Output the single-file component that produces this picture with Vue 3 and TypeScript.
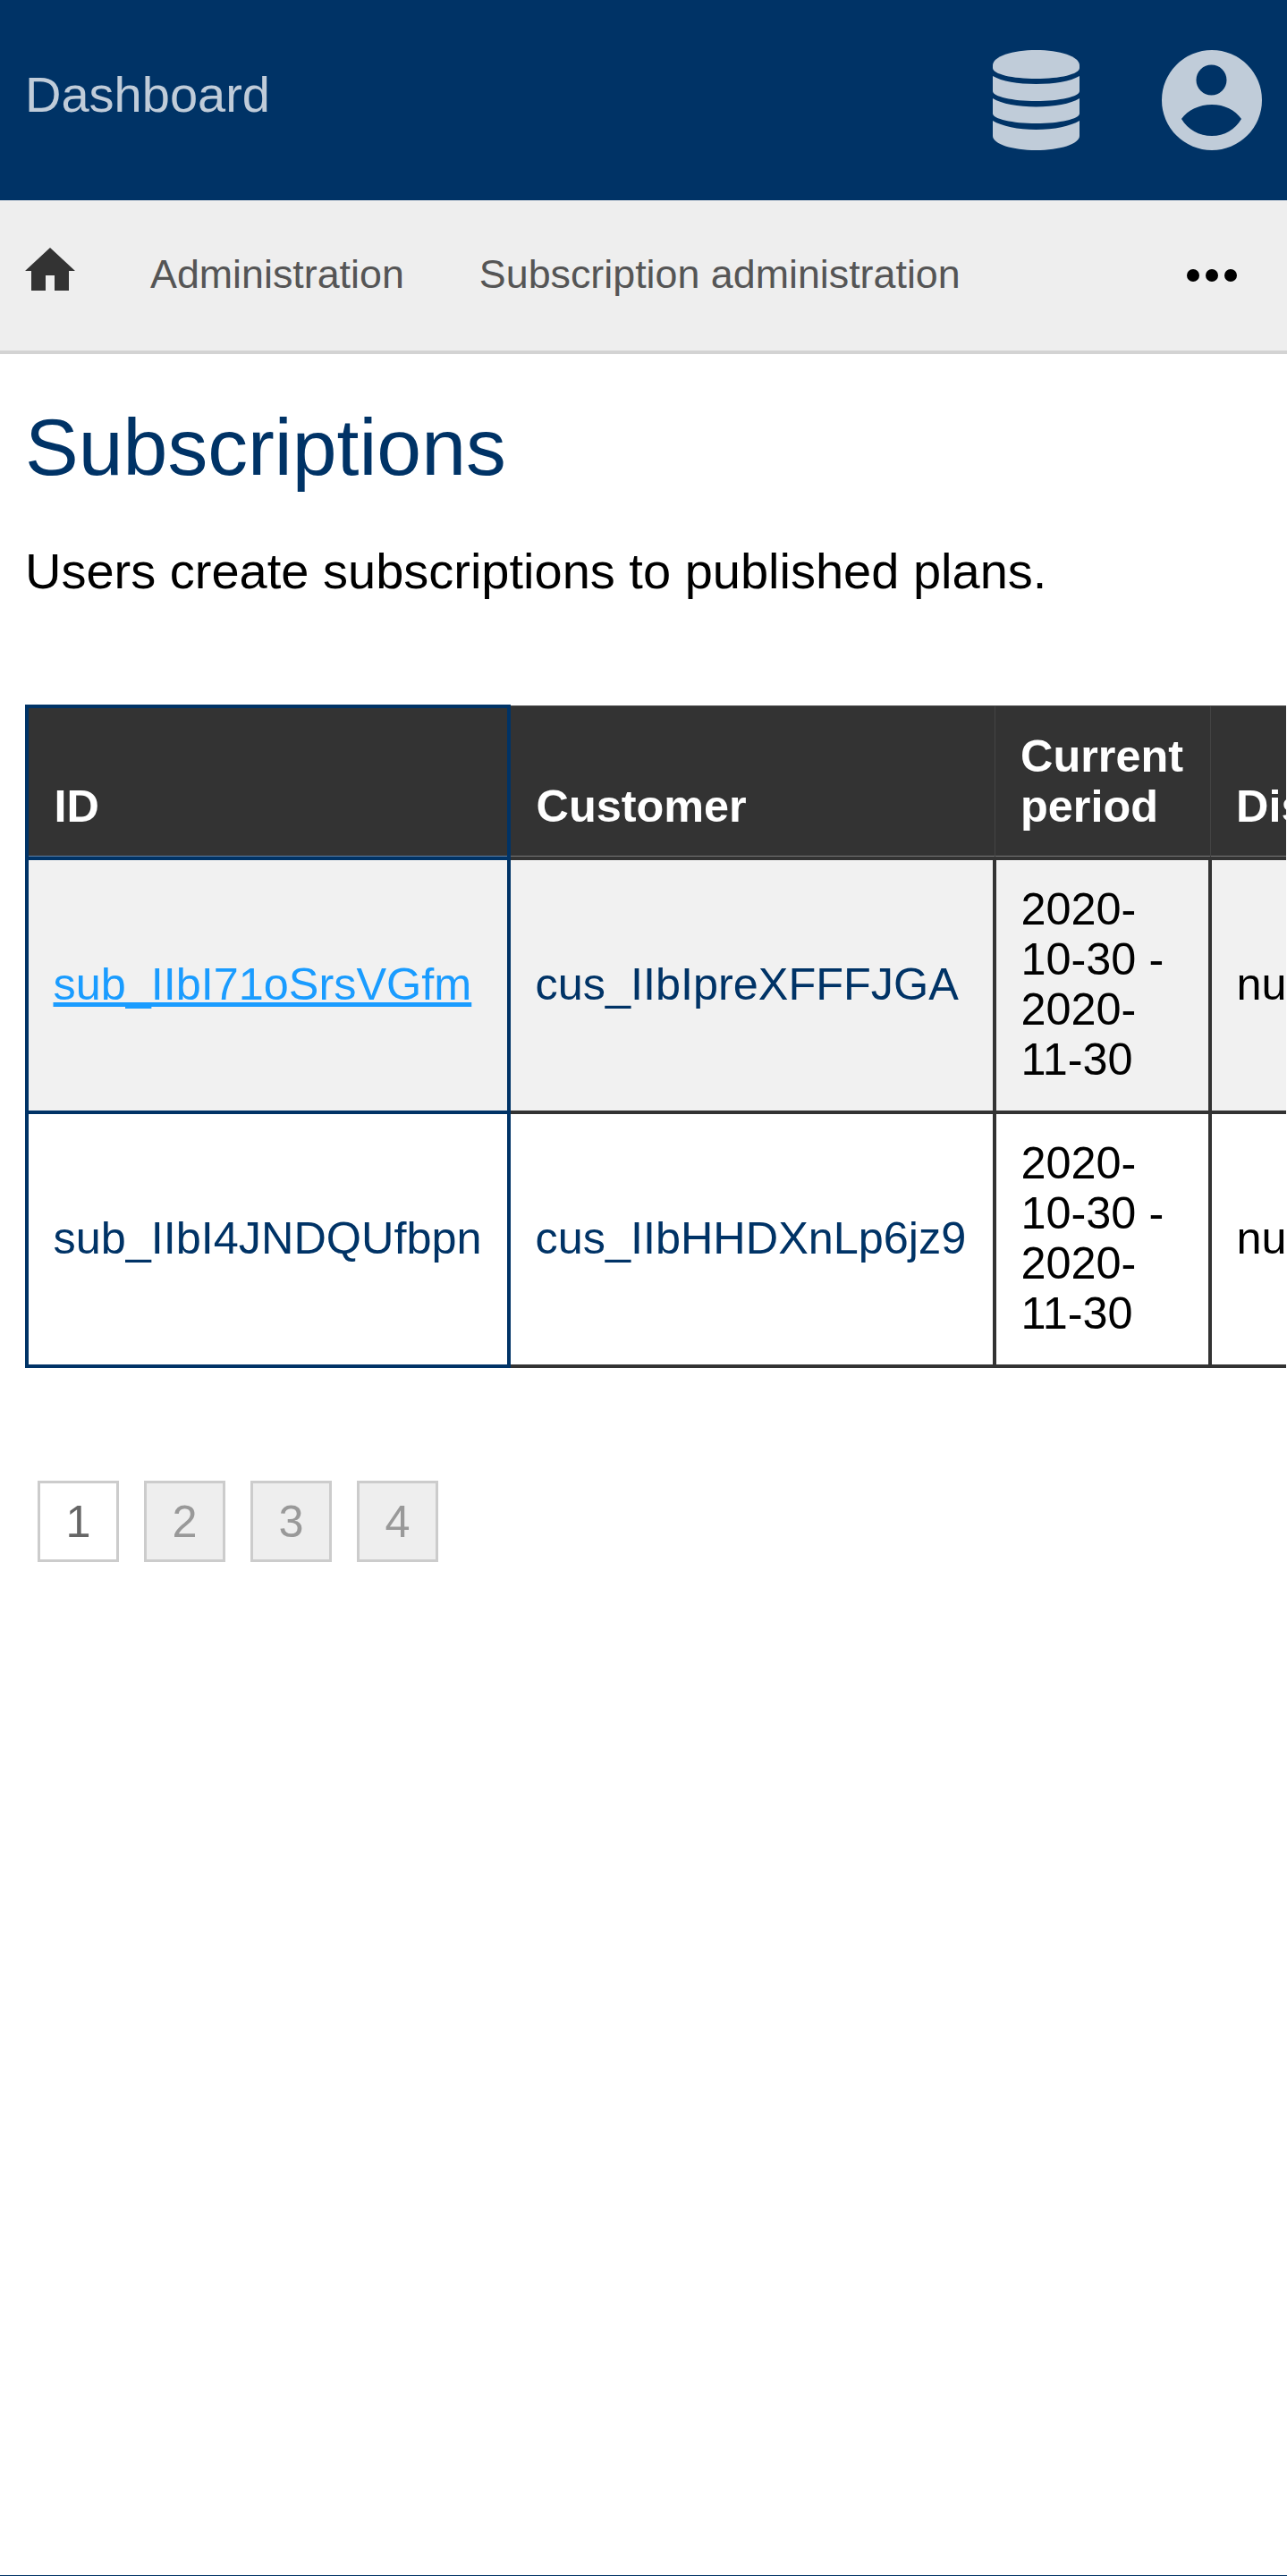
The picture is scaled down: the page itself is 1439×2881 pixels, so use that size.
<script setup lang="ts">
const rows = [
  { id: 'sub_IIbI71oSrsVGfm', customer: 'cus_IIbIpreXFFFJGA', linked: true },
  { id: 'sub_IIbI4JNDQUfbpn', customer: 'cus_IIbHHDXnLp6jz9', linked: false },
]
const pages = [1, 2, 3, 4]
</script>

<template>
  <div class="page">
    <header class="topbar">
      <a class="brand">Dashboard</a>
      <div class="topbar-icons">
        <svg class="icon-db" viewBox="0 0 97 112" fill="currentColor">
          <path d="M48.5 0C75 0 97 7 97 17V20C97 27 75 32 48.5 32S0 27 0 20V17C0 7 22 0 48.5 0z" />
          <path d="M0 29C10 35 28 38 48.5 38S87 35 97 29V46C97 52 75 57 48.5 57S0 52 0 46z" />
          <path d="M0 54C10 60 28 63.5 48.5 63.5S87 60 97 54V71C97 77 75 82 48.5 82S0 77 0 71z" />
          <path d="M0 79C10 85 28 89 48.5 89S87 85 97 79V96C97 105 75 112 48.5 112S0 105 0 96z" />
        </svg>
        <svg class="icon-user" viewBox="0 0 112 112" fill="currentColor">
          <path fill-rule="evenodd" d="M56 0a56 56 0 1 1 0 112A56 56 0 0 1 56 0zM55.500 16.500a17 17 0 1 0 0 34a17 17 0 0 0 0-34zM22 77C29 67 42 61 56 61S82 67 89 77C82 89 70 96 56 96S29 89 22 77z" />
        </svg>
      </div>
    </header>

    <nav class="subnav">
      <svg class="icon-home" viewBox="0 0 56 48" fill="currentColor">
        <path d="M28 0L56 26H49V48H33V31H23V48H7V26H0z" />
      </svg>
      <a class="subnav-link">Administration</a>
      <a class="subnav-link">Subscription administration</a>
      <div class="dots"><i></i><i></i><i></i></div>
    </nav>

    <main class="content">
      <h1>Subscriptions</h1>
      <p class="lead">Users create subscriptions to published plans.</p>

      <div class="table-wrap">
        <table>
          <colgroup>
            <col class="col-id" />
            <col class="col-customer" />
            <col class="col-period" />
            <col class="col-discount" />
          </colgroup>
          <thead>
            <tr>
              <th>ID</th>
              <th>Customer</th>
              <th>Current period</th>
              <th>Discount</th>
            </tr>
          </thead>
          <tbody>
            <tr v-for="row in rows" :key="row.id">
              <td class="navy">
                <a v-if="row.linked" class="row-link">{{ row.id }}</a>
                <template v-else>{{ row.id }}</template>
              </td>
              <td class="navy">{{ row.customer }}</td>
              <td>2020-10-30 - 2020-11-30</td>
              <td>null</td>
            </tr>
          </tbody>
        </table>
      </div>

      <div class="pager">
        <span v-for="p in pages" :key="p" class="page-box" :class="{ active: p === 1 }">{{ p }}</span>
      </div>
    </main>

    <footer class="foot"></footer>
  </div>
</template>

<style>
html,
body {
  margin: 0;
  background: #fff;
}
</style>

<style scoped>
.page {
  display: flex;
  flex-direction: column;
  min-height: 2881px;
  font-family: "Liberation Sans", Arial, sans-serif;
  color: #000;
}

.topbar {
  height: 224px;
  background: #036;
  color: #c0ccd9;
  display: flex;
  align-items: center;
  justify-content: space-between;
  padding: 0 28px;
}

.brand {
  font-size: 56px;
  margin-bottom: 14px;
}

.topbar-icons {
  display: flex;
  align-items: center;
  gap: 92px;
}

.icon-db {
  width: 97px;
  height: 112px;
}

.icon-user {
  width: 112px;
  height: 112px;
}

.subnav {
  height: 168px;
  background: #eee;
  border-bottom: 4px solid #d3d3d3;
  display: flex;
  align-items: center;
  padding: 0 56px 0 28px;
}

.icon-home {
  width: 56px;
  height: 48px;
  color: #333;
  margin-right: 84px;
  margin-top: -14px;
}

.subnav-link {
  font-size: 44.8px;
  color: #555;
  margin-right: 84px;
  margin-bottom: 4px;
}

.dots {
  margin-left: auto;
  display: flex;
  gap: 7px;
}

.dots i {
  width: 14px;
  height: 14px;
  border-radius: 50%;
  background: #000;
}

.content {
  padding: 0 0 0 28px;
}

h1 {
  margin: 53px 0 0;
  font-size: 89.6px;
  font-weight: 400;
  line-height: 1.15;
  color: #036;
}

.lead {
  margin: 51px 0 0;
  font-size: 56px;
  line-height: 1.3;
}

.table-wrap {
  margin-top: 112px;
  margin-right: 1px;
  overflow: hidden;
}

table {
  border-collapse: collapse;
  table-layout: fixed;
  width: 1600px;
  font-size: 50.4px;
  line-height: 56px;
}

.col-id {
  width: 539px;
}

.col-customer {
  width: 543px;
}

.col-period {
  width: 241px;
}

.col-discount {
  width: 280px;
}

th {
  background: #333;
  color: #fff;
  font-weight: 700;
  text-align: left;
  vertical-align: bottom;
  padding: 28px 28px 28px 28.5px;
  border: 1px solid #444;
  border-bottom: 4px solid #333;
  box-shadow: inset 0 -1px 0 #777;
}

td {
  padding: 27px 28px 29px 27.5px;
  border: 4px solid #333;
  vertical-align: middle;
}

th:first-child,
td:first-child {
  border: 4px solid #036;
}

th:first-child {
  box-shadow: inset 0 -1px 0 #5f80a3;
}

td.navy {
  color: #036;
}

tbody tr:nth-child(odd) td {
  background: #f1f1f1;
}

.row-link {
  color: #1a9cff;
  text-decoration: underline;
}

.pager {
  display: flex;
  gap: 28px;
  margin: 126px 0 0 14px;
}

.page-box {
  box-sizing: border-box;
  width: 91px;
  height: 91px;
  border: 3px solid #ccc;
  background: #eee;
  color: #999;
  font-size: 50.4px;
  display: flex;
  align-items: center;
  justify-content: center;
}

.page-box.active {
  background: #fff;
  color: #666;
}

.foot {
  margin-top: auto;
  height: 1px;
  background: #036;
}
</style>
